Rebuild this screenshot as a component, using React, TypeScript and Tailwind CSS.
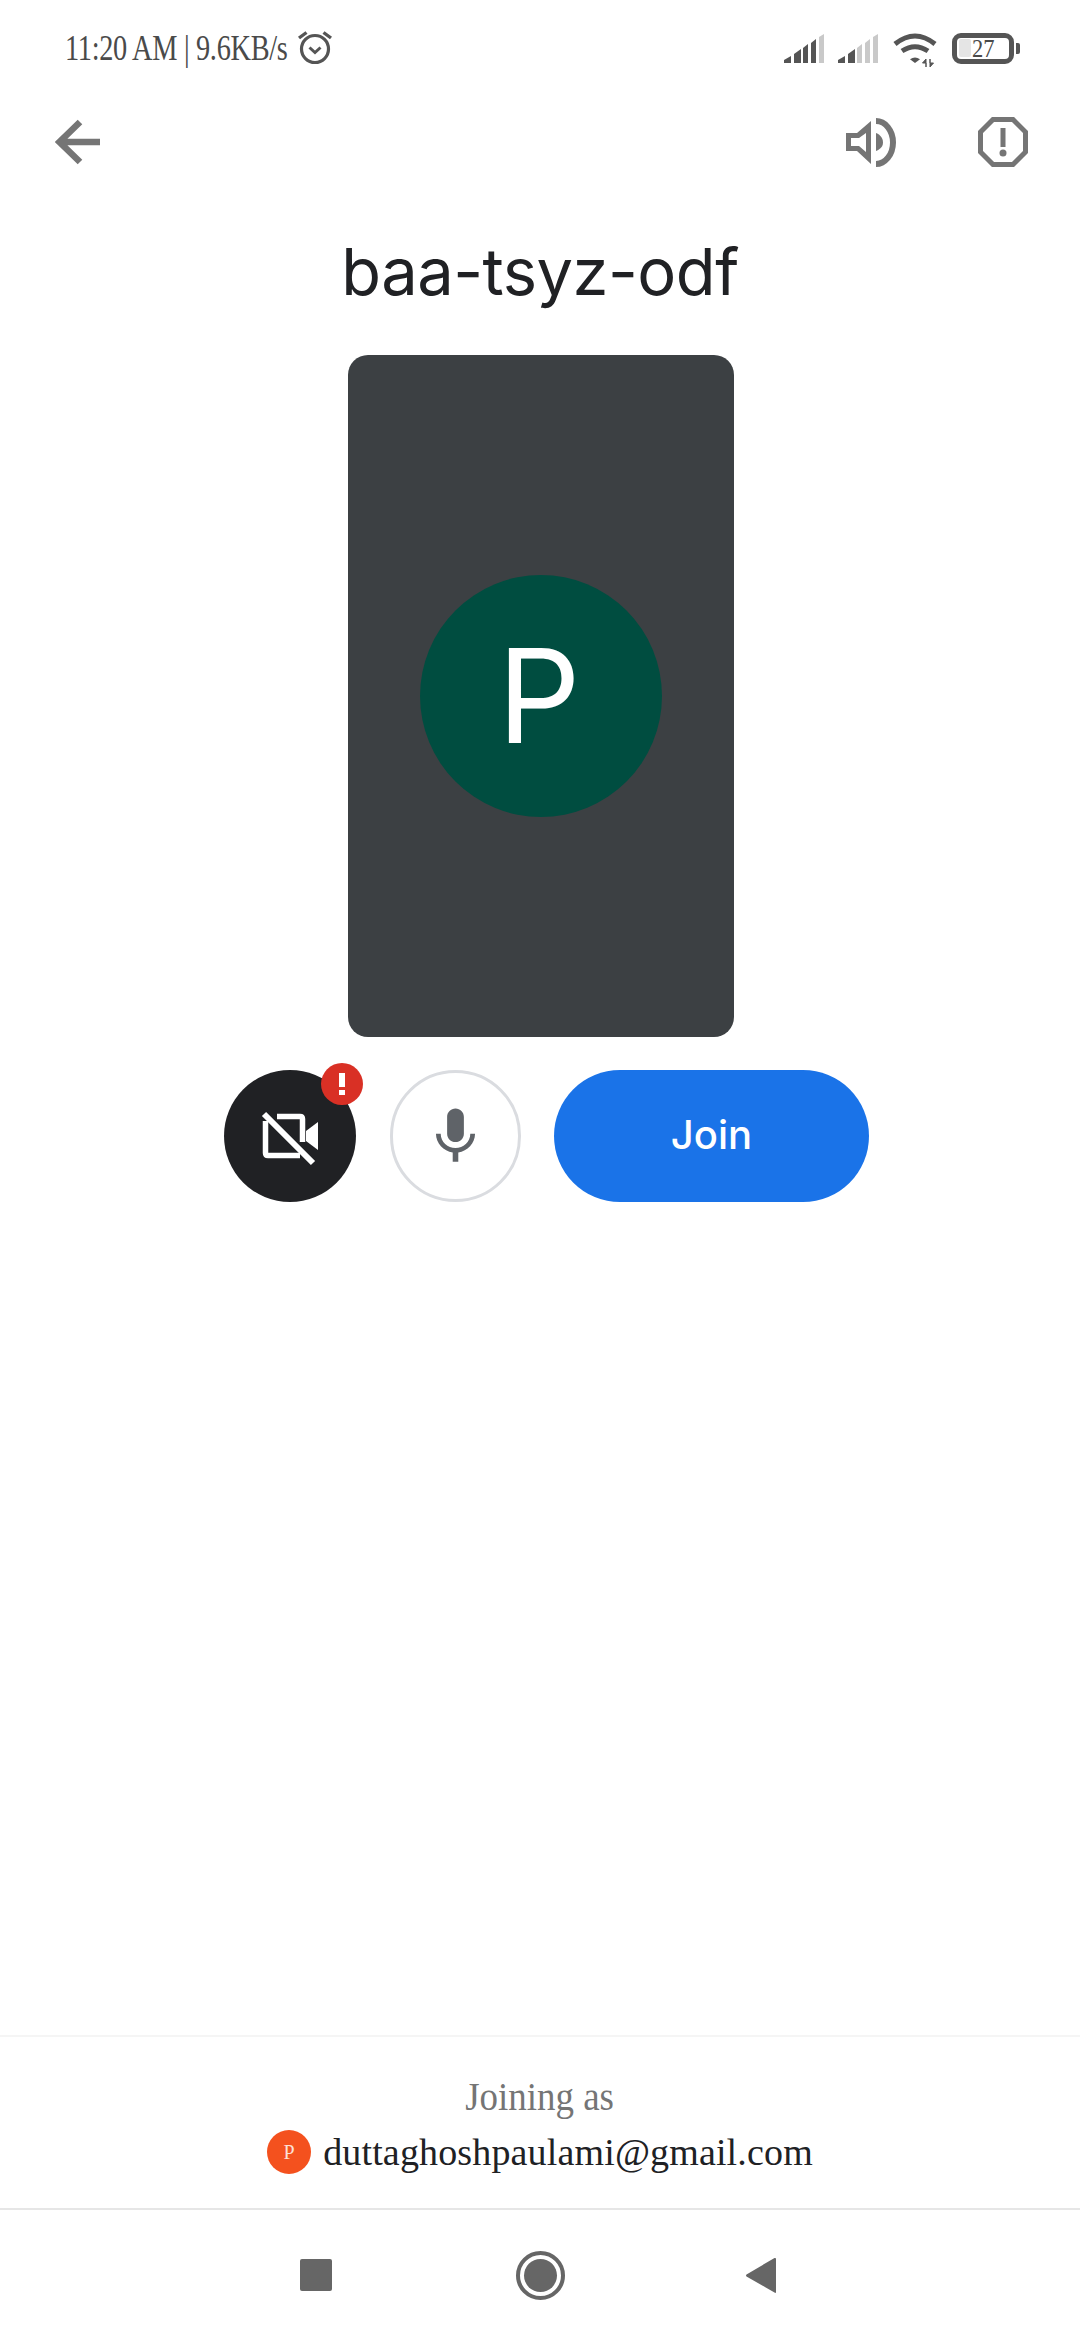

function Signal({ solid }: { solid: number }) {
  const bars = [
    "M0 29 V26 L7 22 V29 Z",
    "M10 29 V20 L17 15 V29 Z",
    "M19 29 V14 L24 10 V29 Z",
    "M27 29 V9 L32 5 V29 Z",
    "M35 29 V3 L40 0 V29 Z",
  ];
  return (
    <svg width="40" height="29" viewBox="0 0 40 29">
      {bars.map((d, i) => (
        <path key={i} d={d} fill={i < solid ? "#555555" : "#c9c9c9"} />
      ))}
    </svg>
  );
}
export default function App() {
  return (
    <div className="w-[1080px] h-[2340px] bg-white flex flex-col overflow-hidden font-['Inter',sans-serif]">
      <div className="h-[96px] flex items-center justify-between pl-[65px] pr-[60px] shrink-0">
        <div className="flex items-center">
          <span className="w-[218px] whitespace-nowrap font-['Liberation_Serif',serif] text-[35px] leading-none text-[#4a4a4a] tracking-[-0.4px] origin-left scale-x-[0.81]">
            11:20 AM | 9.6KB/s
          </span>
          <svg width="36" height="36" viewBox="0 0 36 36" className="ml-[14px] -mt-[2px]" fill="none" stroke="#555555" strokeWidth="3.2">
            <circle cx="18" cy="20" r="13.5" />
            <path d="M12.5 18.5 L18 23.5 L23.5 18.5" strokeWidth="3" />
            <path d="M2 9 L9.5 3.5 M34 9 L26.5 3.5" strokeWidth="3.4" />
          </svg>
        </div>
        <div className="flex items-center">
          <Signal solid={4} />
          <span className="w-[14px]" />
          <Signal solid={2} />
          <svg width="46" height="34" viewBox="0 0 46 34" className="ml-[14px] mt-[3px]">
            <path d="M3 11 Q23 -5 43 11" fill="none" stroke="#555555" strokeWidth="5" />
            <path d="M10 18 Q23 9.5 36 18" fill="none" stroke="#555555" strokeWidth="5" />
            <path d="M18 26.3 Q23 22.5 28 26.3 L23 30 Z" fill="#555555" />
            <path d="M34 26 L30.5 30 H34 V34 Z M38 26 V34 L41.5 30 H38 Z" fill="#555555" stroke="#555555" strokeWidth="1" />
          </svg>
          <div className="ml-[14px] w-[62px] h-[31px] rounded-[9px] border-[5px] border-[#555555] flex items-center pl-[2px]">
            <span className="w-[12px] h-[18px] bg-[#e5e5e5] rounded-[2px]" />
            <span className="ml-[1px] font-['Liberation_Serif',serif] text-[25px] leading-none text-[#4a4a4a] origin-left scale-x-[0.9]">27</span>
          </div>
          <span className="ml-[2px] w-[4px] h-[11px] rounded-r-[2px] bg-[#555555]" />
        </div>
      </div>

      <div className="h-[92px] flex items-center justify-between pl-[55px] pr-[52px] shrink-0">
        <svg width="46" height="46" viewBox="0 0 46 46" fill="none" stroke="#757575" strokeWidth="6.5">
          <path d="M45 23 H5 M25 3 L4.5 23 L25 43" />
        </svg>
        <div className="flex items-center gap-[82px]">
          <svg width="50" height="49" viewBox="0 0 50 49" fill="#757575">
            <path fillRule="evenodd" d="M0 15 H11 L25 3 V46 L11 33 H0 Z M5 20 V28 H13 L20 34 V15 L13 20 Z" />
            <path d="M30 0 A20 24.5 0 0 1 30 49 V43 A14 18.5 0 0 0 30 6 Z" />
            <path d="M30 15 C35 17 37 21 37 24.5 C37 28 35 31 30 33 Z" />
          </svg>
          <svg width="50" height="50" viewBox="0 0 50 50">
            <path d="M15 2.5 H35 L47.5 15 V35 L35 47.5 H15 L2.5 35 V15 Z" fill="none" stroke="#757575" strokeWidth="5" />
            <rect x="22.5" y="11" width="5" height="19" fill="#757575" />
            <circle cx="25" cy="36" r="3.5" fill="#757575" />
          </svg>
        </div>
      </div>

      <div className="h-[167px] flex items-center justify-center shrink-0 pb-[1px]">
        <h1 className="text-[65px] leading-none font-normal text-[#202124] tracking-[-0.5px]">baa-tsyz-odf</h1>
      </div>

      <div className="w-[386px] h-[682px] ml-[348px] shrink-0 rounded-[20px] bg-[#3c4043] flex items-center justify-center">
        <div className="w-[242px] h-[242px] rounded-full bg-[#004d40] flex items-center justify-center text-white text-[130px] leading-none font-normal pr-[4px]">
          P
        </div>
      </div>

      <div className="mt-[33px] h-[132px] pl-[224px] flex items-center shrink-0">
        <div className="relative w-[132px] h-[132px] rounded-full bg-[#202124] flex items-center justify-center">
          <svg width="80" height="75" viewBox="0 0 80 75" className="mt-[3px]" fill="none" stroke="#ffffff" strokeWidth="5.5">
            <path d="M14 14 L63 63" strokeWidth="6" />
            <path d="M15.5 21 V53 Q15.5 55.5 18 55.5 H50" strokeLinejoin="round" />
            <path d="M27 16.5 H50 Q52.5 16.5 52.5 19 V42" strokeLinejoin="round" />
            <path d="M56 31 L68 22 V50 L56 41 Z" fill="#ffffff" stroke="none" />
          </svg>
          <span className="absolute left-[97px] -top-[7px] w-[42px] h-[42px] rounded-full bg-[#d93025] flex items-center justify-center">
            <svg width="6" height="22" viewBox="0 0 6 22" fill="#ffffff">
              <rect x="0" y="0" width="6" height="14" />
              <rect x="0" y="17" width="6" height="5" />
            </svg>
          </span>
        </div>
        <div className="ml-[34px] w-[131px] h-[132px] rounded-full border-[3px] border-[#dadce0] flex items-center justify-center">
          <svg width="67" height="67" viewBox="0 0 24 24" fill="#5f6368">
            <path d="M12 14c1.66 0 3-1.34 3-3V5c0-1.66-1.34-3-3-3S9 3.34 9 5v6c0 1.66 1.34 3 3 3zm5.3-3c0 3-2.54 5.1-5.3 5.1S6.7 14 6.7 11H5c0 3.41 2.72 6.23 6 6.72V21h2v-3.28c3.28-.48 6-3.3 6-6.72h-1.7z" />
          </svg>
        </div>
        <div className="ml-[33px] w-[315px] h-[132px] rounded-full bg-[#1a73e8] flex items-center justify-center text-white text-[40px] font-medium leading-none pb-[2px]">
          Join
        </div>
      </div>

      <div className="flex-1" />

      <div className="h-[175px] border-t-2 border-[#f5f5f5] border-b-2 border-b-[#e6e6e6] flex flex-col items-center shrink-0 pt-[37px] font-['Liberation_Serif',serif]">
        <div className="text-[41px] leading-[44px] text-[#757575] scale-x-[0.9]">Joining as</div>
        <div className="flex items-center mt-[10px]">
          <span className="w-[44px] h-[44px] rounded-full bg-[#f4511e] text-[#fde0d6] text-[20px] leading-none flex items-center justify-center">P</span>
          <span className="ml-[12px] text-[38px] leading-[48px] text-[#202124] tracking-[0.15px] whitespace-nowrap">duttaghoshpaulami@gmail.com</span>
        </div>
      </div>

      <div className="h-[130px] flex items-center pl-[300px] shrink-0">
        <span className="w-[32px] h-[32px] rounded-[2px] bg-[#666666]" />
        <span className="ml-[184px] w-[49px] h-[49px] rounded-full border-[4px] border-[#666666] bg-white flex items-center justify-center">
          <span className="w-[33px] h-[33px] rounded-full bg-[#666666]" />
        </span>
        <svg width="32" height="37" viewBox="0 0 32 37" className="ml-[180px]">
          <path d="M31 2 V35 Q31 36.5 29.5 35.5 L1.5 19.5 Q0.5 18.5 1.5 17.5 L29.5 1 Q31 0.5 31 2 Z" fill="#666666" />
        </svg>
      </div>
    </div>
  );
}
